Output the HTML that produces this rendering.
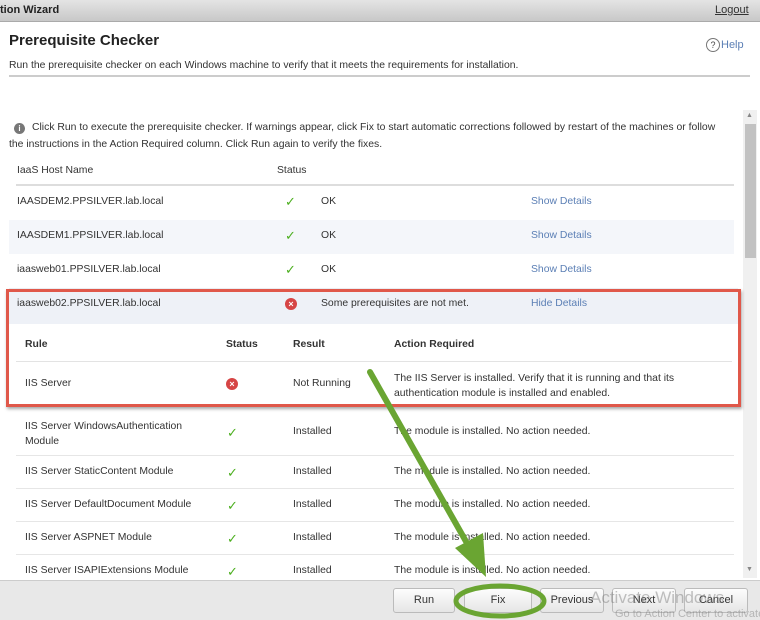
<!DOCTYPE html>
<html><head><style>
*{margin:0;padding:0;box-sizing:border-box}
body{width:760px;height:620px;overflow:hidden;background:#fff;font-family:"Liberation Sans",Arial,sans-serif;font-size:10.4px;color:#333;position:relative}
.a{position:absolute;white-space:nowrap}
.lnk{color:#5b7fb5}
.ck{color:#4caf1f;font-size:13px}
.btn{position:absolute;top:588px;height:25px;border:1px solid #bbb;border-radius:3px;background:linear-gradient(#fdfdfd,#e6e6e6);text-align:center;line-height:23px;font-size:11px;color:#333}
.sep{position:absolute;left:16px;width:718px;height:1px;background:#e6e6e6}
.x{position:absolute;width:12px;height:12px;border-radius:50%;background:#d64545;color:#fff;font-size:9px;text-align:center;line-height:12px;font-weight:bold}
</style></head><body>
<div class="a" style="left:0;top:0;width:760px;height:22px;background:linear-gradient(#e4e4e4,#c8c8c8);border-bottom:1px solid #aaa"></div>
<div class="a" style="left:0;top:4px;font-weight:bold;font-size:11px;color:#222">tion Wizard</div>
<div class="a" style="left:715px;top:4px;font-size:11px;text-decoration:underline;color:#333">Logout</div>
<div class="a" style="left:9px;top:32px;font-size:15px;font-weight:bold;color:#222">Prerequisite Checker</div>
<div class="a" style="left:706px;top:38px;width:14px;height:14px;border:1px solid #777;border-radius:50%;font-size:9px;text-align:center;line-height:12px;color:#444">?</div>
<div class="a lnk" style="left:721px;top:39px;font-size:11px">Help</div>
<div class="a" style="left:9px;top:60px">Run the prerequisite checker on each Windows machine to verify that it meets the requirements for installation.</div>
<div class="a" style="left:9px;top:75px;width:741px;height:2px;background:#ccc"></div>
<div class="a" style="left:743px;top:110px;width:14px;height:468px;background:#f0f0f0"></div>
<div class="a" style="left:745px;top:124px;width:11px;height:134px;background:#c2c2c2"></div>
<div class="a" style="left:746px;top:112px;font-size:7px;color:#888">▲</div>
<div class="a" style="left:746px;top:566px;font-size:7px;color:#888">▼</div>
<div class="a" style="left:14px;top:123px;width:11px;height:11px;border-radius:50%;background:#777;color:#fff;font-size:8px;font-weight:bold;text-align:center;line-height:11px">i</div>
<div class="a" style="left:32px;top:122px">Click Run to execute the prerequisite checker. If warnings appear, click Fix to start automatic corrections followed by restart of the machines or follow</div>
<div class="a" style="left:9px;top:139px">the instructions in the Action Required column. Click Run again to verify the fixes.</div>
<div class="a" style="left:17px;top:165px">IaaS Host Name</div>
<div class="a" style="left:277px;top:165px">Status</div>
<div class="sep" style="top:184px;height:2px;background:#ddd"></div>
<div class="a" style="left:9px;top:220px;width:725px;height:34px;background:#f4f6fa"></div>
<div class="a" style="left:9px;top:288px;width:729px;height:36px;background:#eef1f7"></div>
<div class="a" style="left:17px;top:196px">IAASDEM2.PPSILVER.lab.local</div>
<div class="a" style="left:17px;top:230px">IAASDEM1.PPSILVER.lab.local</div>
<div class="a" style="left:17px;top:264px">iaasweb01.PPSILVER.lab.local</div>
<div class="a" style="left:17px;top:298px">iaasweb02.PPSILVER.lab.local</div>
<div class="a ck" style="left:285px;top:194px">✓</div>
<div class="a ck" style="left:285px;top:228px">✓</div>
<div class="a ck" style="left:285px;top:262px">✓</div>
<div class="x" style="left:285px;top:298px">×</div>
<div class="a" style="left:321px;top:196px">OK</div>
<div class="a" style="left:321px;top:230px">OK</div>
<div class="a" style="left:321px;top:264px">OK</div>
<div class="a" style="left:321px;top:298px">Some prerequisites are not met.</div>
<div class="a lnk" style="left:531px;top:196px">Show Details</div>
<div class="a lnk" style="left:531px;top:230px">Show Details</div>
<div class="a lnk" style="left:531px;top:264px">Show Details</div>
<div class="a lnk" style="left:531px;top:298px">Hide Details</div>
<div class="a" style="left:25px;top:339px;font-weight:bold">Rule</div>
<div class="a" style="left:226px;top:339px;font-weight:bold">Status</div>
<div class="a" style="left:293px;top:339px;font-weight:bold">Result</div>
<div class="a" style="left:394px;top:339px;font-weight:bold">Action Required</div>
<div class="a" style="left:16px;top:361px;width:716px;height:1px;background:#e3e3e3"></div>
<div class="a" style="left:25px;top:378px">IIS Server</div>
<div class="x" style="left:226px;top:378px">×</div>
<div class="a" style="left:293px;top:378px">Not Running</div>
<div class="a" style="left:394px;top:371px;line-height:15px">The IIS Server is installed. Verify that it is running and that its<br>authentication module is installed and enabled.</div>
<div class="a" style="left:6px;top:289px;width:735px;height:118px;border:3px solid #e0584a;box-shadow:1px 2px 3px rgba(0,0,0,.35)"></div>
<div class="a" style="left:25px;top:419px;line-height:15px">IIS Server WindowsAuthentication<br>Module</div>
<div class="a" style="left:25px;top:466px">IIS Server StaticContent Module</div>
<div class="a" style="left:25px;top:499px">IIS Server DefaultDocument Module</div>
<div class="a" style="left:25px;top:532px">IIS Server ASPNET Module</div>
<div class="a" style="left:25px;top:565px">IIS Server ISAPIExtensions Module</div>
<div class="sep" style="top:455px"></div>
<div class="sep" style="top:488px"></div>
<div class="sep" style="top:521px"></div>
<div class="sep" style="top:554px"></div>
<div class="a ck" style="left:227px;top:425px">✓</div>
<div class="a ck" style="left:227px;top:465px">✓</div>
<div class="a ck" style="left:227px;top:498px">✓</div>
<div class="a ck" style="left:227px;top:531px">✓</div>
<div class="a ck" style="left:227px;top:564px">✓</div>
<div class="a" style="left:293px;top:426px">Installed</div>
<div class="a" style="left:293px;top:466px">Installed</div>
<div class="a" style="left:293px;top:499px">Installed</div>
<div class="a" style="left:293px;top:532px">Installed</div>
<div class="a" style="left:293px;top:565px">Installed</div>
<div class="a" style="left:394px;top:426px">The module is installed. No action needed.</div>
<div class="a" style="left:394px;top:466px">The module is installed. No action needed.</div>
<div class="a" style="left:394px;top:499px">The module is installed. No action needed.</div>
<div class="a" style="left:394px;top:532px">The module is installed. No action needed.</div>
<div class="a" style="left:394px;top:565px">The module is installed. No action needed.</div>
<div class="a" style="left:0;top:580px;width:760px;height:40px;background:#e8e8e8;border-top:1px solid #ccc"></div>
<div class="btn" style="left:393px;width:62px">Run</div>
<div class="btn" style="left:464px;width:68px">Fix</div>
<div class="btn" style="left:540px;width:64px">Previous</div>
<div class="btn" style="left:612px;width:64px">Next</div>
<div class="btn" style="left:684px;width:64px">Cancel</div>
<div class="a" style="left:590px;top:588px;font-size:17px;color:rgba(120,120,120,.45)">Activate Windows</div>
<div class="a" style="left:615px;top:608px;font-size:11px;color:rgba(120,120,120,.45)">Go to Action Center to activate</div>
<svg class="a" style="left:0;top:0" width="760" height="620">
<line x1="370" y1="372" x2="468" y2="545" stroke="#6aa532" stroke-width="6" stroke-linecap="round"/>
<polygon points="455,548 486,577 483,533" fill="#6aa532"/>
<ellipse cx="500" cy="601" rx="44" ry="15" fill="none" stroke="#6aa532" stroke-width="5"/>
</svg>
</body></html>
